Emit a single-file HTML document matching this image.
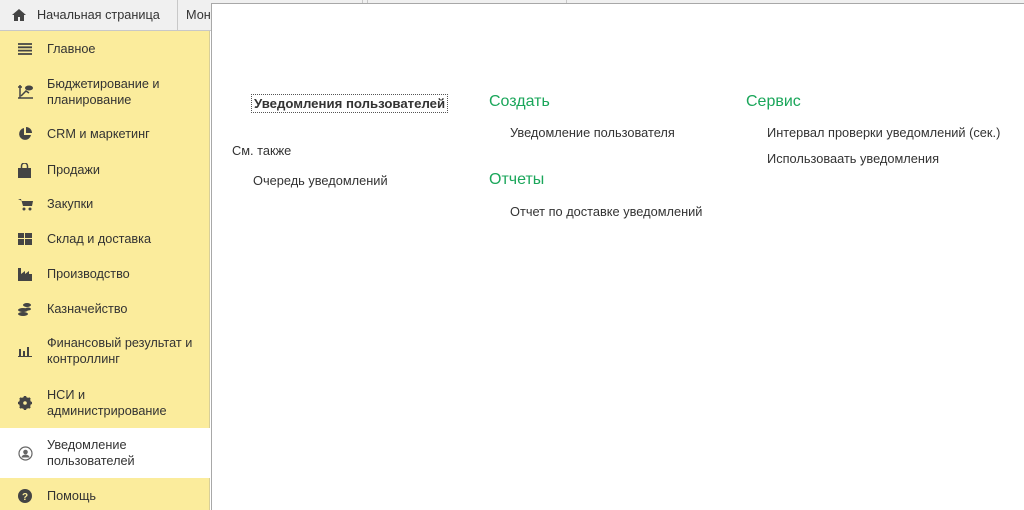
<!DOCTYPE html>
<html><head><meta charset="utf-8"><style>
*{margin:0;padding:0;box-sizing:border-box}
body{width:1024px;height:510px;overflow:hidden;background:#fff;font-family:"Liberation Sans",sans-serif;color:#333;position:relative;font-size:13px}
.top{position:absolute;left:0;top:0;width:1024px;height:31px;background:#f0f0f0;border-bottom:1px solid #c8c8c8}
.tab{position:absolute;top:0;height:31px;line-height:31px;border-right:1px solid #c8c8c8;font-size:12.7px;color:#333}
.side{position:absolute;left:0;top:31px;width:210px;height:479px;background:#fbec9c;border-right:1px solid #d8cf98}
.it{position:absolute;left:0;width:210px;display:flex;align-items:center}
.it svg{position:absolute;left:18px}
.it span{position:absolute;left:47px;line-height:16px;font-size:12.7px;color:#333}
.panel{position:absolute;left:211px;top:3px;width:813px;height:507px;background:#fff;border-left:1px solid #a8a8a8;border-top:1px solid #a8a8a8}
.t{position:absolute;white-space:nowrap;font-size:12.8px;color:#333}
.g{position:absolute;white-space:nowrap;font-size:16px;color:#1aa65a}
</style></head><body>
<div class="top">
<div class="tab" style="left:0;width:178px"><svg style="position:absolute;left:12px;top:9px" width="14" height="12" viewBox="0 0 14 12"><path d="M7 0L0 6h2v6h4V8h2v4h4V6h2z" fill="#444"/></svg><span style="position:absolute;left:37px">Начальная страница</span></div>
<div class="tab" style="left:178px;width:190px"><span style="position:absolute;left:8px">Монитор</span></div>
<div class="tab" style="left:362px;width:205px;border-left:1px solid #c8c8c8"></div>
</div>
<div class="side">
<div class="it" style="top:8px;height:20px"><svg width="14" height="12" viewBox="0 0 14 12"><path d="M0 1h14M0 4.3h14M0 7.6h14M0 11h14" stroke="#444" stroke-width="1.8"/></svg><span>Главное</span></div>
<div class="it" style="top:45px;height:32px"><svg width="16" height="16" viewBox="0 0 16 16"><path d="M2 1v13h13M0 3h4M0 14h4" stroke="#444" stroke-width="1.5" fill="none"/><ellipse cx="11" cy="4" rx="4" ry="2.5" fill="#444"/><path d="M3 12l5-5 3 2" stroke="#444" stroke-width="1.5" fill="none"/></svg><span>Бюджетирование и<br>планирование</span></div>
<div class="it" style="top:93px;height:20px"><svg width="14" height="14" viewBox="0 0 14 14"><path d="M6 1A6 6 0 1 0 13 8H6z" fill="#444"/><path d="M8 0v6h6A6 6 0 0 0 8 0z" fill="#444"/></svg><span>CRM и маркетинг</span></div>
<div class="it" style="top:129px;height:20px"><svg width="13" height="15" viewBox="0 0 13 15"><path d="M0 5h13v10H0z" fill="#444"/><path d="M3.5 6V3a3 3 0 0 1 6 0v3" stroke="#444" stroke-width="1.5" fill="none"/></svg><span>Продажи</span></div>
<div class="it" style="top:163px;height:20px"><svg width="15" height="13" viewBox="0 0 15 13"><path d="M0 1h3l2 7h9l1-5H4" fill="#444"/><circle cx="6" cy="11" r="1.5" fill="#444"/><circle cx="12" cy="11" r="1.5" fill="#444"/></svg><span>Закупки</span></div>
<div class="it" style="top:198px;height:20px"><svg width="14" height="12" viewBox="0 0 14 12"><path d="M0 0h6v5H0zM7 0h7v5H7zM0 6h6v6H0zM7 6h7v6H7z" fill="#444"/></svg><span>Склад и доставка</span></div>
<div class="it" style="top:233px;height:20px"><svg width="14" height="13" viewBox="0 0 14 13"><path d="M0 13V0h3v6l4-3v3l4-3v3h3v7z" fill="#444"/></svg><span>Производство</span></div>
<div class="it" style="top:268px;height:20px"><svg width="14" height="14" viewBox="0 0 14 14"><ellipse cx="9" cy="3" rx="4" ry="2" fill="#444"/><ellipse cx="5" cy="8" rx="5" ry="2" fill="#444"/><ellipse cx="5" cy="12" rx="5" ry="2" fill="#444"/><ellipse cx="10" cy="7" rx="3" ry="1.5" fill="#444"/></svg><span>Казначейство</span></div>
<div class="it" style="top:304px;height:32px"><svg width="14" height="12" viewBox="0 0 14 12"><path d="M1 4h2v7H1zM5 6h2v5H5zM9 2h2v9H9zM0 11h14v1H0z" fill="#444"/></svg><span>Финансовый результат и<br>контроллинг</span></div>
<div class="it" style="top:356px;height:32px"><svg width="14" height="14" viewBox="0 0 14 14"><circle cx="7" cy="7" r="4.5" fill="none" stroke="#444" stroke-width="3"/><path d="M7 0v14M0 7h14M2 2l10 10M12 2L2 12" stroke="#444" stroke-width="2.5"/><circle cx="7" cy="7" r="1.8" fill="#fbec9c"/></svg><span>НСИ и<br>администрирование</span></div>
<div class="it" style="top:397px;height:50px;background:#fff"><svg width="15" height="15" viewBox="0 0 15 15"><circle cx="7.5" cy="7.5" r="6.5" fill="none" stroke="#666" stroke-width="1.2"/><circle cx="7.5" cy="6" r="2.3" fill="#666"/><path d="M3.5 11.5a4 3 0 0 1 8 0z" fill="#666"/></svg><span>Уведомление<br>пользователей</span></div>
<div class="it" style="top:455px;height:20px"><svg width="14" height="14" viewBox="0 0 14 14"><circle cx="7" cy="7" r="7" fill="#444"/><text x="7" y="11" font-size="10" font-weight="bold" text-anchor="middle" fill="#fbec9c" font-family="Liberation Sans">?</text></svg><span>Помощь</span></div>
</div>
<div class="panel"></div>
<div class="t" style="left:251px;top:94px;font-weight:bold;border:1px dotted #555;padding:1px 2px;font-size:13.2px">Уведомления пользователей</div>
<div class="t" style="left:232px;top:143px">См. также</div>
<div class="t" style="left:253px;top:173px">Очередь уведомлений</div>
<div class="g" style="left:489px;top:93px">Создать</div>
<div class="t" style="left:510px;top:125px">Уведомление пользователя</div>
<div class="g" style="left:489px;top:171px">Отчеты</div>
<div class="t" style="left:510px;top:204px">Отчет по доставке уведомлений</div>
<div class="g" style="left:746px;top:93px">Сервис</div>
<div class="t" style="left:767px;top:125px">Интервал проверки уведомлений (сек.)</div>
<div class="t" style="left:767px;top:151px">Использоваать уведомления</div>
</body></html>
